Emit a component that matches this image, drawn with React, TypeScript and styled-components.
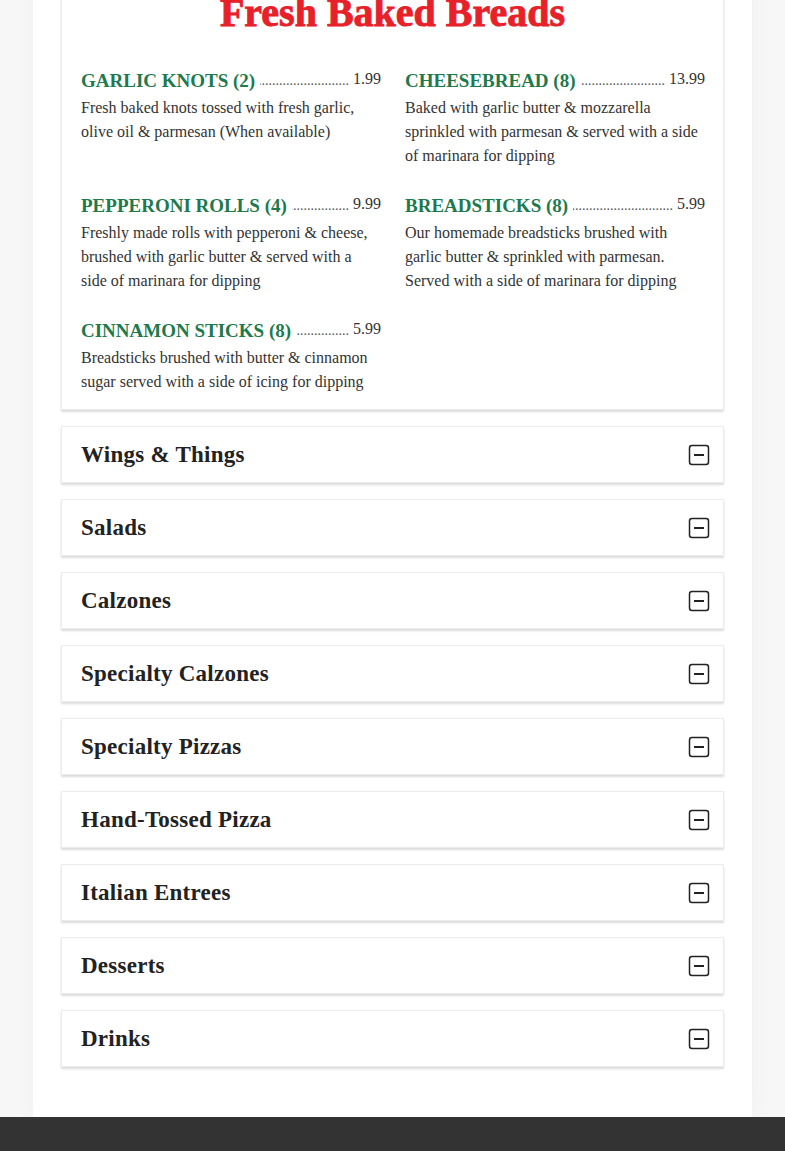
import React from "react";
import styled, { createGlobalStyle } from "styled-components";

const GlobalStyle = createGlobalStyle`
  html, body {
    margin: 0;
    padding: 0;
    background: #f7f7f7;
  }
  body {
    font-family: "Liberation Serif", "Times New Roman", serif;
    color: #333;
    overflow: hidden;
  }
`;

type Item = { name: string; price: string; desc: string };

const breads: Item[] = [
  {
    name: "GARLIC KNOTS (2)",
    price: "1.99",
    desc: "Fresh baked knots tossed with fresh garlic, olive oil & parmesan (When available)",
  },
  {
    name: "CHEESEBREAD (8)",
    price: "13.99",
    desc: "Baked with garlic butter & mozzarella sprinkled with parmesan & served with a side of marinara for dipping",
  },
  {
    name: "PEPPERONI ROLLS (4)",
    price: "9.99",
    desc: "Freshly made rolls with pepperoni & cheese, brushed with garlic butter & served with a side of marinara for dipping",
  },
  {
    name: "BREADSTICKS (8)",
    price: "5.99",
    desc: "Our homemade breadsticks brushed with garlic butter & sprinkled with parmesan. Served with a side of marinara for dipping",
  },
  {
    name: "CINNAMON STICKS (8)",
    price: "5.99",
    desc: "Breadsticks brushed with butter & cinnamon sugar served with a side of icing for dipping",
  },
];

const sections = [
  "Wings & Things",
  "Salads",
  "Calzones",
  "Specialty Calzones",
  "Specialty Pizzas",
  "Hand-Tossed Pizza",
  "Italian Entrees",
  "Desserts",
  "Drinks",
];

const MinusBox = () => (
  <svg width="22" height="22" viewBox="0 0 22 22" fill="none">
    <rect x="1.5" y="1.5" width="19" height="19" rx="2.5" stroke="#222" strokeWidth="1.5" />
    <line x1="6" y1="11" x2="16" y2="11" stroke="#222" strokeWidth="2" />
  </svg>
);

const App = (): JSX.Element => {
  return (
    <>
      <GlobalStyle />
      <Column>
        <Card>
          <Title>Fresh Baked Breads</Title>
          <Grid>
            {breads.map((item) => (
              <MenuItem key={item.name}>
                <NameRow>
                  <Name>{item.name}</Name>
                  <Leader>{".".repeat(80)}</Leader>
                  <Price>{item.price}</Price>
                </NameRow>
                <Desc>{item.desc}</Desc>
              </MenuItem>
            ))}
          </Grid>
        </Card>
        {sections.map((s) => (
          <Section key={s}>
            <SectionTitle>{s}</SectionTitle>
            <MinusBox />
          </Section>
        ))}
      </Column>
      <Footer />
    </>
  );
};

export default App;

const Column = styled.main`
  width: 663px;
  margin: -40px 0 0 33px;
  padding: 0 28px 50px;
  background: #fff;
  box-shadow: 0 0 24px rgba(0, 0, 0, 0.035);
  display: flex;
  flex-direction: column;
  gap: 16px;
`;

const Card = styled.section`
  background: #fff;
  border: 1px solid #ececec;
  box-shadow: 0 2px 2px rgba(0, 0, 0, 0.14);
  padding: 0 19px 15px;
`;

const Title = styled.h2`
  margin: 0;
  padding-top: 30px;
  text-align: center;
  font-family: "Liberation Serif", "Times New Roman", serif;
  font-weight: bold;
  font-size: 40px;
  line-height: 44px;
  color: #e8202a;
  -webkit-text-stroke: 0.9px #e8202a;
`;

const Grid = styled.div`
  display: grid;
  grid-template-columns: 300px 300px;
  column-gap: 24px;
  row-gap: 27px;
  margin-top: 35px;
`;

const MenuItem = styled.div`
  display: flex;
  flex-direction: column;
`;

const NameRow = styled.div`
  display: flex;
  align-items: baseline;
  height: 26px;
`;

const Name = styled.span`
  font-weight: bold;
  font-size: 19px;
  color: #1d7a4d;
  white-space: nowrap;
`;

const Leader = styled.span`
  flex: 1;
  min-width: 0;
  overflow: hidden;
  white-space: nowrap;
  direction: rtl;
  font-size: 14px;
  color: #555;
  margin: 0 4px 0 5px;
  position: relative;
  top: -2px;
`;

const Price = styled.span`
  font-size: 16px;
  color: #333;
  position: relative;
  top: -3px;
`;

const Desc = styled.p`
  margin: 0;
  font-size: 16px;
  line-height: 24px;
  color: #333;
`;

const Section = styled.section`
  display: flex;
  align-items: center;
  justify-content: space-between;
  height: 55px;
  padding: 0 13px 0 19px;
  background: #fff;
  border: 1px solid #ececec;
  box-shadow: 0 2px 2px rgba(0, 0, 0, 0.14);
`;

const SectionTitle = styled.h3`
  margin: 0;
  font-family: "Liberation Serif", "Times New Roman", serif;
  font-weight: bold;
  font-size: 23px;
  letter-spacing: 0.25px;
  color: #222;
`;

const Footer = styled.footer`
  height: 200px;
  background: #333;
`;
